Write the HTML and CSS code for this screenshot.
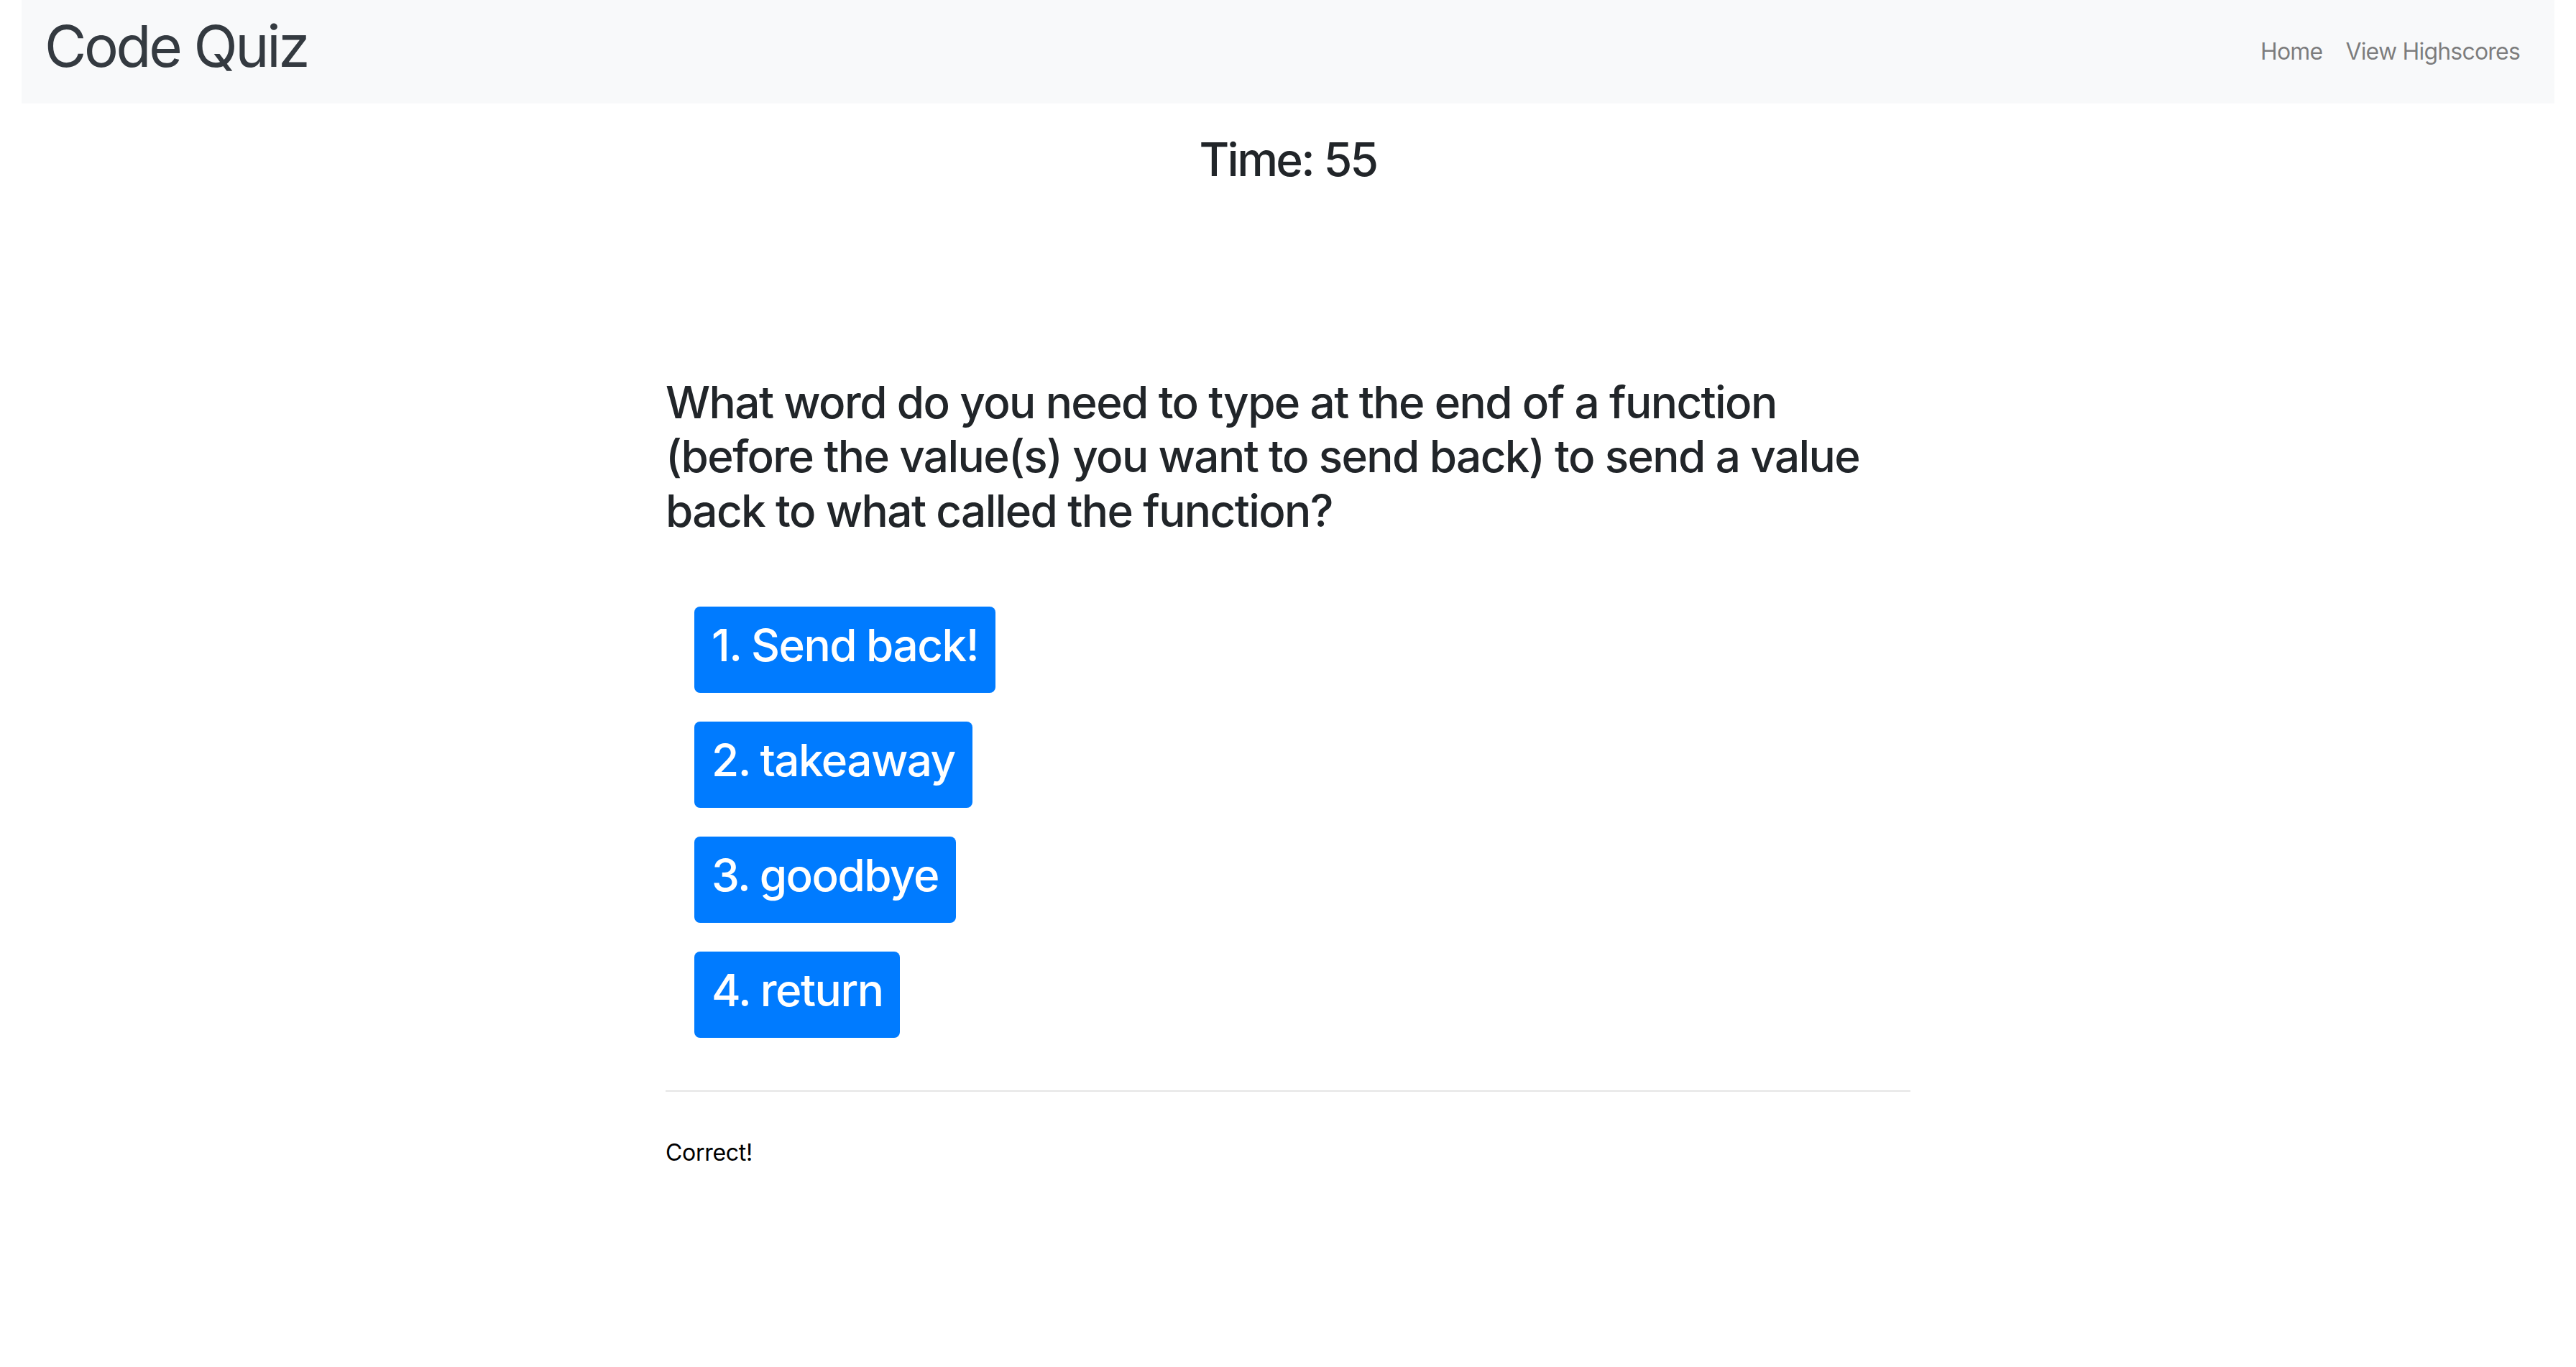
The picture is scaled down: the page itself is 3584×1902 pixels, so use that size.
FILE: index.html
```html
<!DOCTYPE html>
<html lang="en">
<head>
<meta charset="utf-8">
<title>Code Quiz</title>
<link rel="stylesheet" href="styles.css">
</head>
<body>
<div class="page">
  <nav class="navbar">
    <a class="brand" href="#">Code Quiz</a>
    <ul class="nav">
      <li><a class="nav-link" href="#">Home</a></li>
      <li><a class="nav-link" href="#">View Highscores</a></li>
    </ul>
  </nav>
  <h2 class="timer">Time: 55</h2>
  <main class="quiz">
    <h2 class="question">What word do you need to type at the end of a function<br>(before the value(s) you want to send back) to send a value<br>back to what called the function?</h2>
    <ol class="choices">
      <li><button class="btn">1. Send back!</button></li>
      <li><button class="btn">2. takeaway</button></li>
      <li><button class="btn">3. goodbye</button></li>
      <li><button class="btn">4. return</button></li>
    </ol>
    <hr class="divider">
    <p class="feedback">Correct!</p>
  </main>
</div>
</body>
</html>
```
FILE: styles.css
```css
* { box-sizing: border-box; }
html, body {
  margin: 0;
  padding: 0;
  background: #ffffff;
}
body {
  font-family: Inter, "Liberation Sans", sans-serif;
  font-size: 32px;
  line-height: 1.5;
  color: #212529;
}
.page {
  padding: 0 30px;
}
.navbar {
  display: flex;
  align-items: center;
  justify-content: space-between;
  height: 144px;
  padding: 0 32px;
  background: #f8f9fa;
}
.brand {
  font-size: 80px;
  line-height: 1.21;
  font-weight: 400;
  color: #343a40;
  text-decoration: none;
  margin-bottom: 15px;
  letter-spacing: -3.4px;
}
.nav {
  display: flex;
  list-style: none;
  margin: 0;
  padding: 0;
}
.nav-link {
  display: block;
  padding: 16px;
  font-size: 32px;
  line-height: 48px;
  color: rgba(0, 0, 0, 0.5);
  text-decoration: none;
  letter-spacing: -0.8px;
}
.timer {
  margin: 40px 0 0;
  text-align: center;
  font-size: 64px;
  line-height: 1.2;
  font-weight: 500;
  letter-spacing: -2.6px;
}
.quiz {
  width: 1732px;
  margin: 0 auto;
}
.question {
  margin: 261px 0 0;
  font-size: 62px;
  line-height: 75.5px;
  font-weight: 500;
  letter-spacing: -1.6px;
}
.choices {
  list-style: none;
  margin: 96px 0 0;
  padding: 0 0 0 40px;
}
.choices li {
  margin-bottom: 40px;
}
.choices li:last-child {
  margin-bottom: 0;
}
.btn {
  display: inline-block;
  height: 120px;
  padding: 6px 24px 18px;
  border: 0;
  border-radius: 8px;
  background: #007bff;
  color: #ffffff;
  font-family: Inter, "Liberation Sans", sans-serif;
  font-size: 62px;
  line-height: 96px;
  font-weight: 500;
  letter-spacing: -1.5px;
  word-spacing: -1px;
  cursor: pointer;
}
.divider {
  margin: 73px 0 0;
  border: 0;
  border-top: 2px solid rgba(0, 0, 0, 0.1);
}
.feedback {
  margin: 61px 0 0;
  font-size: 32px;
  line-height: 48px;
  color: #000000;
  letter-spacing: -0.3px;
}
```
